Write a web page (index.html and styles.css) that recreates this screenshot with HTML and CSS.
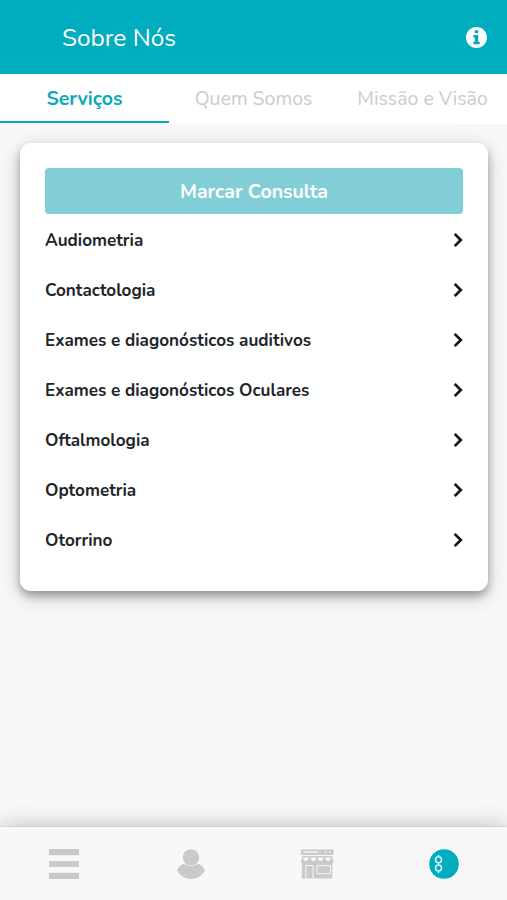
FILE: index.html
```html
<!DOCTYPE html>
<html lang="pt">
<head>
    <meta charset="UTF-8">
    <meta name="viewport" content="width=device-width, initial-scale=1.0">
    <title>Sobre Nós</title>
    <link rel="stylesheet" href="styles.css">
</head>
<body>
    <header>
        <h1>Sobre Nós</h1>
        <svg class="info" viewBox="8 8 496 496"><path fill="#fff" d="M256 8C119.043 8 8 119.083 8 256c0 136.997 111.043 248 248 248s248-111.003 248-248C504 119.083 392.957 8 256 8zm0 70c25 0 44 17 44 40s-19 40-44 40-44-17-44-40 19-40 44-40zm76 326c0 6.627-5.373 12-12 12H192c-6.627 0-12-5.373-12-12v-34c0-6.627 5.373-12 12-12h24v-102h-24c-6.627 0-12-5.373-12-12v-34c0-6.627 5.373-12 12-12h92c6.627 0 12 5.373 12 12v148h24c6.627 0 12 5.373 12 12v34z"/></svg>
    </header>

    <nav class="tabs">
        <a class="tab active">Serviços</a>
        <a class="tab">Quem Somos</a>
        <a class="tab">Missão e Visão</a>
    </nav>

    <main>
        <section class="card">
            <button class="marcar">Marcar Consulta</button>
            <ul class="servicos">
                <li><span>Audiometria</span><svg class="seta" viewBox="0 0 10 16"><path d="M1.7 1.9 7.8 8 1.7 14.1"/></svg></li>
                <li><span>Contactologia</span><svg class="seta" viewBox="0 0 10 16"><path d="M1.7 1.9 7.8 8 1.7 14.1"/></svg></li>
                <li><span>Exames e diagonósticos auditivos</span><svg class="seta" viewBox="0 0 10 16"><path d="M1.7 1.9 7.8 8 1.7 14.1"/></svg></li>
                <li><span>Exames e diagonósticos Oculares</span><svg class="seta" viewBox="0 0 10 16"><path d="M1.7 1.9 7.8 8 1.7 14.1"/></svg></li>
                <li><span>Oftalmologia</span><svg class="seta" viewBox="0 0 10 16"><path d="M1.7 1.9 7.8 8 1.7 14.1"/></svg></li>
                <li><span>Optometria</span><svg class="seta" viewBox="0 0 10 16"><path d="M1.7 1.9 7.8 8 1.7 14.1"/></svg></li>
                <li><span>Otorrino</span><svg class="seta" viewBox="0 0 10 16"><path d="M1.7 1.9 7.8 8 1.7 14.1"/></svg></li>
            </ul>
        </section>
    </main>

    <footer>
        <!-- menu -->
        <a><svg width="30" height="30" viewBox="0 0 30 30" fill="#cacaca"><path d="M0 0h30v6.300H0zM0 11.900h30v6.200H0zM0 23.700h30V30H0z"/></svg></a>
        <!-- perfil -->
        <a><svg width="28" height="30" viewBox="0 0 28 30" fill="#cacaca"><path d="M6.800 14.800C3.900 15.600 1.500 18 0 21.500 3 26.500 8 30 14 30s11-3.500 14-8.500c-1.500-3.500-3.900-5.900-6.800-6.700C19.500 16 17 17 14 17s-5.500-1-7.200-2.200z"/><circle cx="14" cy="8.400" r="8.200"/></svg></a>
        <!-- loja -->
        <a><svg width="33" height="30" viewBox="0 0 33 30"><path fill="#cacaca" d="M0 .5h32.500V6H0zM1.500 7H31l1.500 5c0 1.500-.5 2.300-1.200 2.600V29.500H.8V14.600C.4 14.300 0 13.500 0 12z"/><g fill="#f8f8f8"><path d="M2.500 2.300h15v1.500h-15zM24 2.300h1.500v1.500H24zM28 2.300h1.500v1.500H28z"/><path d="M2.200 8.500h5.400a2.700 3.400 0 0 1-5.400 0zM9.700 8.500h5.400a2.700 3.400 0 0 1-5.400 0zM17 8.500h5.400a2.700 3.400 0 0 1-5.400 0zM24.400 8.500h5.400a2.700 3.400 0 0 1-5.400 0z"/></g><path fill="none" stroke="#f8f8f8" d="M4.900 29.500V16.500h7.200v13M16 16.700h13.500v8H16z"/></svg></a>
        <!-- sobre nós -->
        <a><svg width="30" height="30" viewBox="0 0 30 30"><circle cx="15" cy="15" r="14.800" fill="#00acbe"/><g fill="none" stroke="#d8f4f6" stroke-width="1.500"><circle cx="9.500" cy="10.800" r="3"/><circle cx="9.500" cy="19" r="3"/><path d="M9.500 6v2M9.500 13.600v2.600M9.500 22v2"/></g></svg></a>
    </footer>
</body>
</html>
```
FILE: styles.css
```css
* {
    box-sizing: border-box;
}
body {
    font-family: Nunito, Lato, sans-serif;
    margin: 0;
    height: 900px;
    display: flex;
    flex-direction: column;
    background-color: #f8f8f8;
    overflow: hidden;
}
header {
    display: flex;
    justify-content: space-between;
    align-items: center;
    height: 74px;
    padding: 0 20px 0 62px;
    background-color: #00acbe;
    color: #fff;
}
h1 {
    margin: 0;
    padding-top: 1px;
    font-size: 24.4px;
    font-weight: 400;
}
.info {
    width: 21px;
    height: 21px;
}
.tabs {
    display: grid;
    grid-template-columns: repeat(3, 1fr);
    height: 50px;
    background-color: #fff;
}
.tab {
    height: 49px;
    padding-top: 1px;
    line-height: 48px;
    border-bottom: 2px solid transparent;
    text-align: center;
    font-size: 19.5px;
    color: #cbcbcb;
    white-space: nowrap;
}
.tab.active {
    color: #0ca9b9;
    font-weight: 700;
    border-bottom-color: #0ca9b9;
}
main {
    flex: 1;
    padding: 19px 19px 0 20px;
}
.card {
    height: 448px;
    padding: 25px;
    background-color: #fff;
    border-radius: 11px;
    box-shadow: 0 5px 8px rgba(0, 0, 0, 0.3), 0 6px 22px rgba(0, 0, 0, 0.18);
}
.marcar {
    display: block;
    width: 100%;
    height: 46px;
    padding: 0;
    border: none;
    border-radius: 4px;
    background-color: #82ced6;
    color: #fff;
    font-family: inherit;
    font-size: 19.5px;
    font-weight: 700;
}
.servicos {
    list-style: none;
    margin: 0;
    padding: 1px 0 0;
}
.servicos li {
    display: flex;
    justify-content: space-between;
    align-items: center;
    height: 50px;
    color: #212529;
    font-size: 17.1px;
    font-weight: 700;
}
.seta {
    width: 10px;
    height: 16px;
    fill: none;
    stroke: #151515;
    stroke-width: 2.7;
}
footer {
    display: grid;
    grid-template-columns: repeat(4, 1fr);
    height: 73px;
    padding: 1px 0 0 1px;
    background-color: #f8f8f8;
    box-shadow: 0 0 1px rgba(0, 0, 0, 0.3), 0 0 25px rgba(0, 0, 0, 0.25);
}
footer a {
    display: flex;
    align-items: center;
    justify-content: center;
}
```
